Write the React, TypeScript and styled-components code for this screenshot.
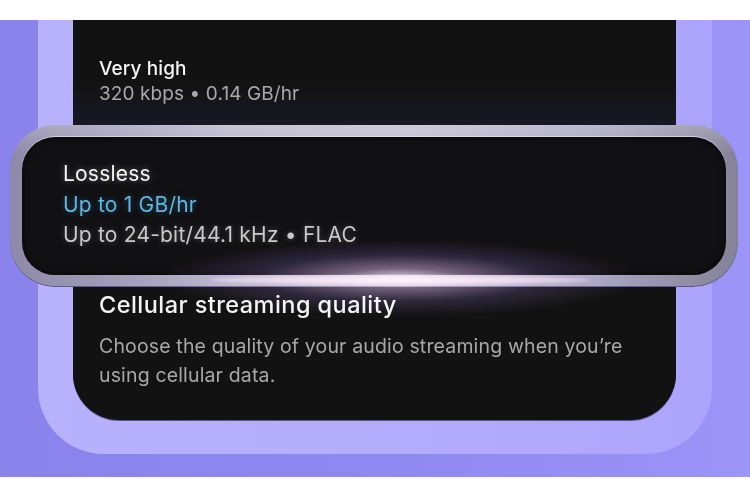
import styled, { createGlobalStyle } from 'styled-components';

const GlobalStyle = createGlobalStyle`
    html, body {
        margin: 0;
        padding: 0;
        background: #ffffff;
    }
    body {
        font-family: Inter, "Noto Sans", sans-serif;
        -webkit-font-smoothing: antialiased;
    }
`;

interface Option {
    title: string;
    lines: { text: string; accent?: boolean }[];
}

const lossless: Option = {
    title: 'Lossless',
    lines: [
        { text: 'Up to 1 GB/hr', accent: true },
        { text: 'Up to 24-bit/44.1 kHz • FLAC' },
    ],
};

const App = () => {
    return (
        <Page>
            <GlobalStyle />
            <Stage>
                <Frame>
                    <Screen>
                        <Quality>
                            <QualityTitle>Very high</QualityTitle>
                            <QualityMeta>320 kbps • 0.14 GB/hr</QualityMeta>
                        </Quality>
                        <HighlightRing>
                            <HighlightCard>
                                <CardTitle>{lossless.title}</CardTitle>
                                {lossless.lines.map((line) => (
                                    <CardLine key={line.text} $accent={line.accent}>
                                        {line.text}
                                    </CardLine>
                                ))}
                            </HighlightCard>
                            <Flare />
                            <Streak />
                        </HighlightRing>
                        <Section>
                            <SectionTitle>Cellular streaming quality</SectionTitle>
                            <SectionText>
                                Choose the quality of your audio streaming when you’re using cellular data.
                            </SectionText>
                        </Section>
                    </Screen>
                </Frame>
            </Stage>
        </Page>
    );
};

const Page = styled.div`
    width: 750px;
    height: 500px;
    padding-top: 20px;
    box-sizing: border-box;
    background: #ffffff;
    overflow: hidden;
`;

const Stage = styled.div`
    height: 457px;
    background: linear-gradient(90deg, #8a83ec 0%, #8f88f0 50%, #9c94f7 100%);
    overflow: hidden;
`;

const Frame = styled.div`
    margin-left: 38px;
    width: 674px;
    height: 434px;
    box-sizing: border-box;
    padding: 0 36px 34px 35px;
    background: linear-gradient(90deg, #b8b1fc 0%, #b3acfc 60%, #aca4fb 100%);
    border-radius: 0 0 66px 66px;
`;

const Screen = styled.div`
    height: 400px;
    box-sizing: border-box;
    padding: 36px 0 0 26px;
    background:
        linear-gradient(180deg, rgba(18, 18, 18, 0) 60px, rgba(40, 38, 80, 0.3) 105px, rgba(18, 18, 18, 0) 106px),
        #121212;
    border-radius: 0 0 46px 46px;
    display: flex;
    flex-direction: column;
    box-shadow: 0 1px 0 rgba(30, 20, 70, 0.6);
`;

const Quality = styled.div`
    display: flex;
    flex-direction: column;
`;

const QualityTitle = styled.div`
    font-size: 19px;
    line-height: 25px;
    color: #f4f4f4;
    font-weight: 500;
    letter-spacing: 0.1px;
`;

const QualityMeta = styled.div`
    font-size: 19px;
    line-height: 25px;
    color: #a9a9a9;
    letter-spacing: 0.1px;
`;

const HighlightRing = styled.div`
    position: relative;
    margin: 19px -62px 0 -89px;
    padding: 12px;
    height: 162px;
    box-sizing: border-box;
    border-radius: 45px;
    background:
        linear-gradient(180deg, rgba(255, 255, 255, 0.22) 0%, rgba(255, 255, 255, 0) 18%),
        linear-gradient(90deg, #8d89a8 0%, #b7b4c9 30%, #c0bdd0 55%, #a9a6bf 80%, #858199 100%);
    box-shadow: inset 0 -1px 0 rgba(60, 50, 110, 0.6);
`;

const HighlightCard = styled.div`
    height: 100%;
    box-sizing: border-box;
    padding: 22px 41px 0;
    border-radius: 33px;
    background: #111012;
    box-shadow:
        0 -1px 0 rgba(230, 228, 245, 0.7),
        inset 0 0 6px rgba(0, 0, 0, 0.7);
    display: flex;
    flex-direction: column;
`;

const CardTitle = styled.div`
    font-size: 21px;
    line-height: 30.5px;
    color: #f6f6f6;
    letter-spacing: 0.2px;
    text-shadow: 0 0 6px rgba(255, 255, 255, 0.35);
`;

const CardLine = styled.div<{ $accent?: boolean }>`
    font-size: 21px;
    line-height: 30.5px;
    letter-spacing: 0.2px;
    color: ${(p) => (p.$accent ? '#5db6e4' : '#c9c9c9')};
    text-shadow: 0 0 6px
        ${(p) => (p.$accent ? 'rgba(93, 182, 228, 0.35)' : 'rgba(255, 255, 255, 0.25)')};
`;

const Flare = styled.div`
    position: absolute;
    left: 390px;
    bottom: -30px;
    width: 480px;
    height: 78px;
    transform: translateX(-50%);
    pointer-events: none;
    background: radial-gradient(
        ellipse at center,
        rgba(255, 235, 250, 0.85) 0%,
        rgba(215, 175, 225, 0.5) 18%,
        rgba(130, 105, 200, 0.22) 42%,
        rgba(80, 70, 170, 0) 70%
    );
    mix-blend-mode: screen;
`;

const Streak = styled.div`
    position: absolute;
    left: 390px;
    bottom: 2px;
    width: 380px;
    height: 10px;
    transform: translateX(-50%);
    pointer-events: none;
    border-radius: 50%;
    background: radial-gradient(
        ellipse at center,
        rgba(255, 250, 255, 1) 0%,
        rgba(250, 230, 245, 0.85) 35%,
        rgba(230, 210, 235, 0) 100%
    );
    filter: blur(1px);
`;

const Section = styled.div`
    margin-top: 4px;
    display: flex;
    flex-direction: column;
    gap: 13px;
`;

const SectionTitle = styled.div`
    font-size: 23.5px;
    line-height: 28px;
    color: #f4f4f4;
    font-weight: 450;
    letter-spacing: 0.45px;
`;

const SectionText = styled.div`
    width: 560px;
    font-size: 19.5px;
    line-height: 28.5px;
    color: #a8a8a8;
    letter-spacing: 0.15px;
`;

export default App;
